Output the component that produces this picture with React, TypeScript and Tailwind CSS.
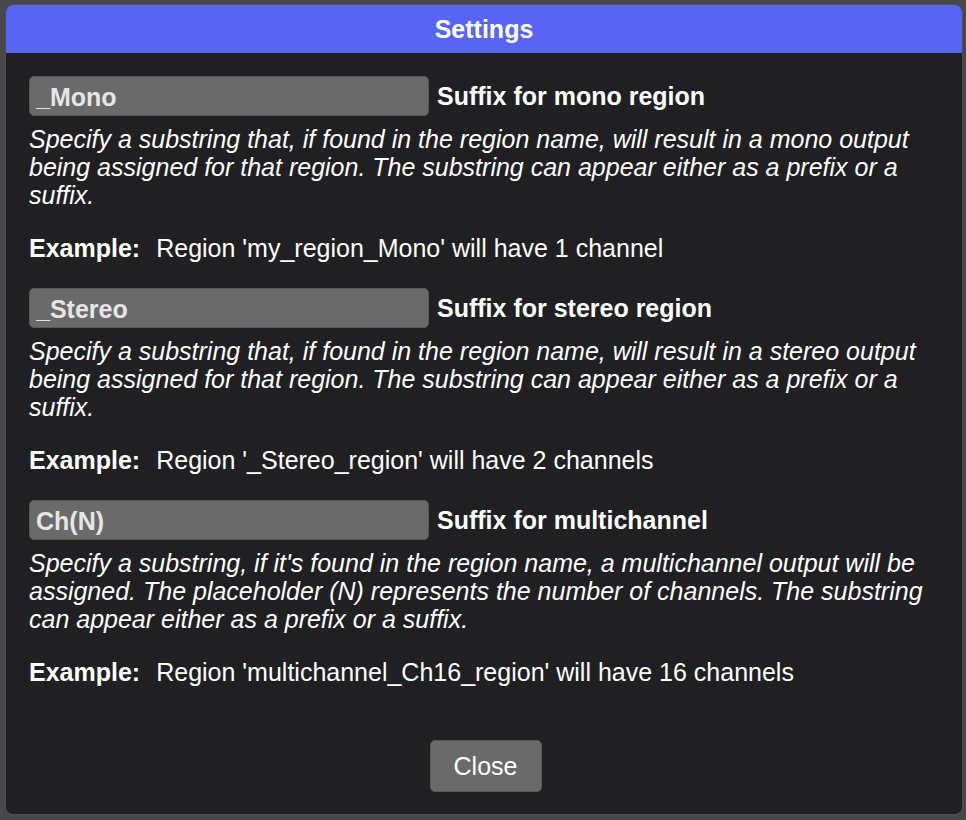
import { useState } from 'react'

interface Rule {
  id: string
  value: string
  label: string
  description: string
  example: string
}

const RULES: Rule[] = [
  {
    id: 'mono',
    value: '_Mono',
    label: 'Suffix for mono region',
    description:
      'Specify a substring that, if found in the region name, will result in a mono output being assigned for that region. The substring can appear either as a prefix or a suffix.',
    example: "Region 'my_region_Mono' will have 1 channel",
  },
  {
    id: 'stereo',
    value: '_Stereo',
    label: 'Suffix for stereo region',
    description:
      'Specify a substring that, if found in the region name, will result in a stereo output being assigned for that region. The substring can appear either as a prefix or a suffix.',
    example: "Region '_Stereo_region' will have 2 channels",
  },
  {
    id: 'multi',
    value: 'Ch(N)',
    label: 'Suffix for multichannel',
    description:
      "Specify a substring, if it's found in the region name, a multichannel output will be assigned. The placeholder (N) represents the number of channels. The substring can appear either as a prefix or a suffix.",
    example: "Region 'multichannel_Ch16_region' will have 16 channels",
  },
]

function App() {
  const [values, setValues] = useState<Record<string, string>>(
    Object.fromEntries(RULES.map(r => [r.id, r.value]))
  )

  return (
    <div
      className="h-[820px] w-[966px] bg-[#48484a] pt-[4px] pl-[5px] pr-[3px] pb-[5px]"
      style={{ fontFamily: '"Liberation Sans", Arial, sans-serif' }}
    >
      {/* Dialog */}
      <div className="flex h-full flex-col overflow-hidden rounded-[8px] border border-[#505054] bg-[#202022]">
        <div className="flex h-[48px] shrink-0 items-center justify-center bg-[#5865f2] pt-[2px] text-[25px] font-bold text-white">
          Settings
        </div>

        <div className="flex flex-1 flex-col pl-[23px] pr-[20px] pt-[23px]">
          {RULES.map(rule => (
            <div key={rule.id} className="h-[212px]">
              <div className="flex items-center gap-[8px]">
                <input
                  value={values[rule.id]}
                  onChange={e => setValues(prev => ({ ...prev, [rule.id]: e.target.value }))}
                  className="h-[40px] w-[400px] rounded-[5px] border border-[#5a5a5a] bg-[#6a6a6a] px-[6px] pt-[2px] text-[25px] font-bold text-[#e6e6e6] outline-none"
                />
                <span className="pt-[2px] text-[25px] font-bold text-white">{rule.label}</span>
              </div>
              <p className="mt-[9px] text-[25px] italic leading-[28px] text-white">{rule.description}</p>
              <p className="mt-[25px] text-[25px] leading-[28px] text-white">
                <span className="font-bold">Example:</span>
                <span className="ml-[16px]">{rule.example}</span>
              </p>
            </div>
          ))}

          <div className="mt-[28px] flex justify-center">
            <button className="h-[52px] w-[112px] rounded-[5px] border border-[#5a5a5a] bg-[#6a6a6a] pt-[2px] text-[25px] text-white">
              Close
            </button>
          </div>
        </div>
      </div>
    </div>
  )
}

export default App
